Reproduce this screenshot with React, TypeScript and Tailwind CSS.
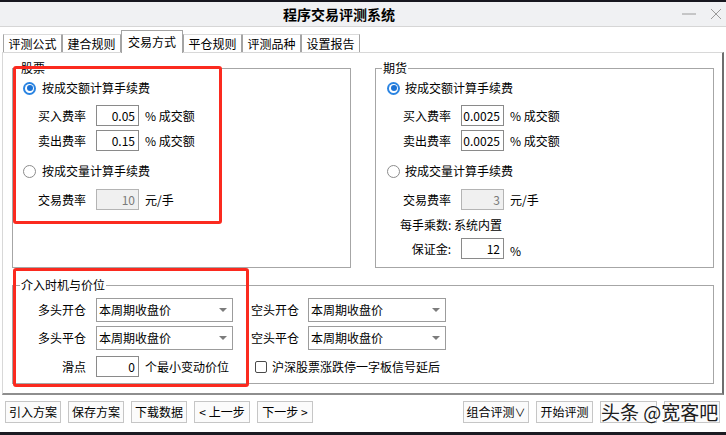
import React from "react";

const FONT = "font-['Noto_Sans_CJK_SC',sans-serif]";

function Radio({ checked }: { checked?: boolean }) {
  if (checked) {
    return (
      <span className="flex h-[13px] w-[13px] shrink-0 items-center justify-center rounded-full bg-[#2a84e2]">
        <span className="flex h-[9px] w-[9px] items-center justify-center rounded-full bg-white">
          <span className="h-[6px] w-[6px] rounded-full bg-[#1c72d4]" />
        </span>
      </span>
    );
  }
  return <span className="h-[13px] w-[13px] shrink-0 rounded-full border border-[#8c8c8c] bg-white" />;
}

function NumBox({ value, disabled }: { value: string; disabled?: boolean }) {
  return (
    <div
      className={
        "flex h-[21px] w-[43px] shrink-0 items-center justify-end border pr-[3px] " +
        (disabled ? "border-[#b4b4b4] bg-[#f0f0f0] text-[#7a7a7a]" : "border-[#8a8a8a] bg-white text-black")
      }
    >
      {value}
    </div>
  );
}

function Combo({ w }: { w: string }) {
  return (
    <div className={"flex h-[24px] shrink-0 items-center justify-between border border-[#9c9c9c] bg-white pl-[2px] pr-[5px] " + w}>
      <span>本周期收盘价</span>
      <svg width="8" height="4" viewBox="0 0 8 4">
        <path d="M0 0h8L4 4z" fill="#7c7c7c" />
      </svg>
    </div>
  );
}

function FeeRow({ label, value, unit, pl, disabled, className = "" }: {
  label: string; value: string; unit: string; pl: string; disabled?: boolean; className?: string;
}) {
  return (
    <div className={"flex h-[21px] items-center " + pl + " " + className}>
      <span className="w-[48px] shrink-0 text-right">{label}</span>
      <span className="ml-[10px]"><NumBox value={value} disabled={disabled} /></span>
      <span className="ml-[6px]">{unit}</span>
    </div>
  );
}

function Btn({ children, w = "w-[56px]" }: { children?: React.ReactNode; w?: string }) {
  return (
    <div className={"flex h-[22px] items-center justify-center border border-[#c6c6c6] bg-[#fbfbfb] " + w}>
      {children}
    </div>
  );
}

export default function App() {
  return (
    <div className={"relative flex h-[435px] w-[726px] flex-col overflow-hidden bg-white text-[12px] leading-[16px] text-black " + FONT}>
      {/* top strip */}
      <div className="h-[2px] bg-[#17171f]" />

      {/* title bar */}
      <div className="flex h-[25px] items-center border-b border-[#d6d6d6] bg-[#f0f1f3]">
        <div className="pl-[283px] text-[14px] font-bold">程序交易评测系统</div>
        <div className="ml-auto flex items-center gap-[14px] pr-[4px]">
          <svg width="14" height="2" viewBox="0 0 14 2">
            <path d="M0 1h14" stroke="#9a9a9a" strokeWidth="1" />
          </svg>
          <svg width="12" height="12" viewBox="0 0 12 12">
            <path d="M1 1l10 10M11 1L1 11" stroke="#9a9a9a" strokeWidth="1" />
          </svg>
        </div>
      </div>

      {/* tabs */}
      <div className="flex h-[25px] items-end pl-[3px]">
        {["评测公式", "建合规则", "交易方式", "平仓规则", "评测品种", "设置报告"].map((t) =>
          t === "交易方式" ? (
            <div key={t} className="relative z-10 -mb-[1px] flex h-[23px] w-[62px] items-center justify-center border-x border-t border-[#a4a4a4] bg-white pb-[1px]">
              {t}
            </div>
          ) : (
            <div key={t} className="flex h-[18px] w-[59px] items-center justify-center border-x border-t border-x-[#a4a4a4] border-t-[#dadada] bg-white">
              {t}
            </div>
          )
        )}
      </div>

      {/* tab page */}
      <div className="ml-[2px] flex h-[343px] w-[722px] flex-col border-b-2 border-l border-r-2 border-t border-b-[#8e8e8e] border-l-[#d8d8d8] border-r-[#6e6e6e] border-t-[#d8d8d8]">
        <div className="mt-[7px] flex">
          {/* 股票 */}
          <fieldset className="ml-[9px] h-[208px] w-[339px] border border-[#a6a6a6]">
            <legend className="ml-[7px] px-[1px] leading-[16px]">股票</legend>
            <div className="mt-[4px] flex h-[16px] items-center gap-[6px] pl-[10px]">
              <Radio checked />
              <span>按成交额计算手续费</span>
            </div>
            <FeeRow label="买入费率" value="0.05" unit="% 成交额" pl="pl-[25px]" className="mt-[9px]" />
            <FeeRow label="卖出费率" value="0.15" unit="% 成交额" pl="pl-[25px]" className="mt-[4px]" />
            <div className="mt-[12px] flex h-[16px] items-center gap-[6px] pl-[10px]">
              <Radio />
              <span>按成交量计算手续费</span>
            </div>
            <FeeRow label="交易费率" value="10" unit="元/手" pl="pl-[25px]" disabled className="mt-[10px]" />
          </fieldset>

          {/* 期货 */}
          <fieldset className="ml-[24px] h-[208px] w-[339px] border border-[#a6a6a6]">
            <legend className="ml-[6px] px-[1px] leading-[16px]">期货</legend>
            <div className="mt-[4px] flex h-[16px] items-center gap-[5px] pl-[11px]">
              <Radio checked />
              <span>按成交额计算手续费</span>
            </div>
            <FeeRow label="买入费率" value="0.0025" unit="% 成交额" pl="pl-[27px]" className="mt-[9px]" />
            <FeeRow label="卖出费率" value="0.0025" unit="% 成交额" pl="pl-[27px]" className="mt-[4px]" />
            <div className="mt-[12px] flex h-[16px] items-center gap-[5px] pl-[11px]">
              <Radio />
              <span>按成交量计算手续费</span>
            </div>
            <FeeRow label="交易费率" value="3" unit="元/手" pl="pl-[27px]" disabled className="mt-[10px]" />
            <div className="mt-[7px] flex h-[16px] items-center pl-[24px]">每手乘数: 系统内置</div>
            <div className="mt-[5px] flex h-[21px] items-center pl-[27px]">
              <span className="w-[48px] shrink-0 text-right">保证金:</span>
              <span className="ml-[10px]"><NumBox value="12" /></span>
              <span className="ml-[6px] self-end">%</span>
            </div>
          </fieldset>
        </div>

        {/* 介入时机与价位 */}
        <fieldset className="ml-[9px] mt-[9px] h-[107px] w-[702px] border border-[#a6a6a6]">
          <legend className="ml-[7px] px-[1px] leading-[16px]">介入时机与价位</legend>
          <div className="mt-[5px] flex h-[24px] items-center">
            <span className="w-[73px] text-right">多头开仓</span>
            <span className="ml-[10px]"><Combo w="w-[137px]" /></span>
            <span className="ml-[18px] w-[48px]">空头开仓</span>
            <span className="ml-[9px]"><Combo w="w-[138px]" /></span>
          </div>
          <div className="mt-[4px] flex h-[24px] items-center">
            <span className="w-[73px] text-right">多头平仓</span>
            <span className="ml-[10px]"><Combo w="w-[137px]" /></span>
            <span className="ml-[18px] w-[48px]">空头平仓</span>
            <span className="ml-[9px]"><Combo w="w-[138px]" /></span>
          </div>
          <div className="mt-[6px] flex h-[21px] items-center">
            <span className="w-[73px] text-right">滑点</span>
            <div className="ml-[10px] flex w-[137px] items-center">
              <NumBox value="0" />
              <span className="ml-[6px] whitespace-nowrap">个最小变动价位</span>
            </div>
            <span className="ml-[22px] h-[12px] w-[12px] rounded-[2px] border border-[#4a4a4a] bg-white" />
            <span className="ml-[5px]">沪深股票涨跌停一字板信号延后</span>
          </div>
        </fieldset>
      </div>

      {/* button bar */}
      <div className="flex items-start px-[5px] pt-[6px]">
        <div className="flex gap-[7px]">
          <Btn>引入方案</Btn>
          <Btn>保存方案</Btn>
          <Btn>下载数据</Btn>
          <Btn>&lt; 上一步</Btn>
          <Btn>下一步 &gt;</Btn>
        </div>
        <div className="ml-auto mr-[1px] flex gap-[7px]">
          <Btn w="w-[66px]">组合评测<span className="text-[11px]">∨</span></Btn>
          <Btn w="w-[57px]">开始评测</Btn>
          <Btn w="w-[57px]" />
          <Btn w="w-[56px]" />
        </div>
      </div>

      {/* bottom strip */}
      <div className="absolute bottom-0 left-0 h-[3px] w-full bg-[#1b1b22]" />

      {/* watermark */}
      <div className="absolute left-[601px] top-[401px] whitespace-nowrap text-[19px] leading-[22px] text-[#202020] [text-shadow:0_0_2px_#fff,0_0_2px_#fff]">
        头条 @宽客吧
      </div>

      {/* red annotation boxes */}
      <div className="absolute left-[13px] top-[66px] h-[158px] w-[209px] rounded-[3px] border-[3px] border-[#fb2a1f]" />
      <div className="absolute left-[13px] top-[268px] h-[119px] w-[236px] rounded-[3px] border-[3px] border-[#fb2a1f]" />
    </div>
  );
}
